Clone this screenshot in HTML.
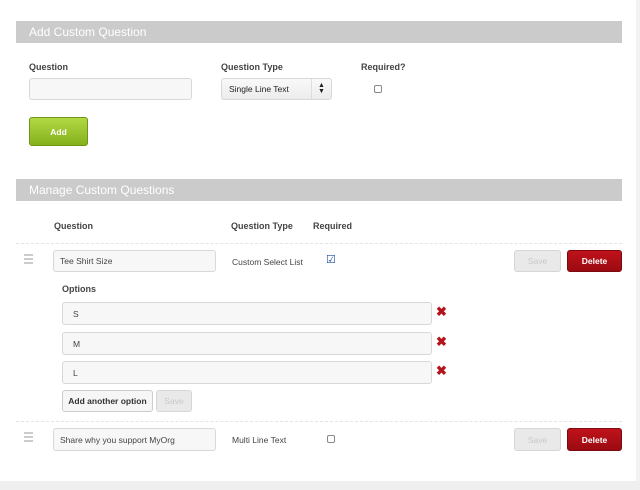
<!DOCTYPE html>
<html><head><style>
*{box-sizing:border-box;margin:0;padding:0}
body{width:640px;height:490px;background:#fff;font-family:"Liberation Sans",sans-serif;position:relative;overflow:hidden;color:#333}
.a{position:absolute}
.bar{background:#cbcbcb;color:#fff;font-size:12px;padding-left:13px}
.lbl{font-size:9px;font-weight:bold;color:#444}
.inp{border:1px solid #d8d8d8;border-radius:3px;background:#f7f7f7;font-size:8.5px;color:#444;padding-left:10px;display:flex;align-items:center}
.btn{border:1px solid #ccc;border-radius:3px;font-size:8.5px;display:flex;align-items:center;justify-content:center}
.save{background:#e9e9e9;color:#c8c8c8;border-color:#d6d6d6}
.del{background:linear-gradient(#c0121b,#9a0b11);color:#fff;font-weight:bold;border-color:#7a0a0e}
.cb{width:8px;height:8px;border:1px solid #888;border-radius:2px;background:#fff}
.x{color:#b5121b;font-size:13px;font-weight:bold}
.dash{border-top:1px dashed #e4e4e4;height:0}
.hd{width:9px}
.hd i{display:block;height:2px;background:#ccc;margin-bottom:2px}
</style></head><body>
<div class="a" style="right:0;top:0;width:4px;height:490px;background:#f3f3f3"></div>
<div class="a" style="left:0;top:481px;width:640px;height:9px;background:#efefef"></div>

<div class="a bar" style="left:16px;top:21px;width:606px;height:22px;line-height:22px">Add Custom Question</div>
<div class="a lbl" style="left:29px;top:62px">Question</div>
<div class="a lbl" style="left:221px;top:62px">Question Type</div>
<div class="a lbl" style="left:361px;top:62px">Required?</div>
<div class="a inp" style="left:29px;top:78px;width:163px;height:22px"></div>
<div class="a inp" style="left:221px;top:78px;width:111px;height:22px;background:linear-gradient(#f9f9f9,#ececec);padding-left:7px;color:#222">Single Line Text</div>
<div class="a" style="left:311px;top:79px;width:1px;height:20px;background:#ddd"></div>
<div class="a" style="left:318px;top:83px;font-size:7px;line-height:6px;color:#222">▲<br>▼</div>
<div class="a cb" style="left:374px;top:85px"></div>
<div class="a btn" style="left:29px;top:117px;width:59px;height:29px;background:linear-gradient(#b2d944,#84b11c);color:#fff;font-weight:bold;border-color:#6f9616">Add</div>

<div class="a bar" style="left:16px;top:179px;width:606px;height:22px;line-height:22px">Manage Custom Questions</div>
<div class="a lbl" style="left:54px;top:221px">Question</div>
<div class="a lbl" style="left:231px;top:221px">Question Type</div>
<div class="a lbl" style="left:313px;top:221px">Required</div>
<div class="a dash" style="left:16px;top:243px;width:606px"></div>

<div class="a hd" style="left:24px;top:254px"><i></i><i></i><i></i></div>
<div class="a inp" style="left:53px;top:250px;width:163px;height:22px;padding-left:6px">Tee Shirt Size</div>
<div class="a" style="left:232px;top:257px;font-size:8.5px;color:#444">Custom Select List</div>
<div class="a" style="left:326px;top:253px;font-size:11px;color:#1a4c9c">☑</div>
<div class="a btn save" style="left:514px;top:250px;width:47px;height:22px">Save</div>
<div class="a btn del" style="left:567px;top:250px;width:55px;height:22px">Delete</div>

<div class="a lbl" style="left:62px;top:284px">Options</div>
<div class="a inp" style="left:62px;top:302px;width:370px;height:23px">S</div>
<div class="a inp" style="left:62px;top:332px;width:370px;height:23px">M</div>
<div class="a inp" style="left:62px;top:361px;width:370px;height:23px">L</div>
<div class="a x" style="left:436px;top:304px">✖</div>
<div class="a x" style="left:436px;top:334px">✖</div>
<div class="a x" style="left:436px;top:363px">✖</div>
<div class="a btn" style="left:62px;top:390px;width:91px;height:22px;background:#f6f6f6;font-weight:bold;color:#333">Add another option</div>
<div class="a btn save" style="left:156px;top:390px;width:36px;height:22px">Save</div>
<div class="a dash" style="left:16px;top:421px;width:606px"></div>

<div class="a hd" style="left:24px;top:432px"><i></i><i></i><i></i></div>
<div class="a inp" style="left:53px;top:428px;width:163px;height:23px;padding-left:6px">Share why you support MyOrg</div>
<div class="a" style="left:232px;top:435px;font-size:8.5px;color:#444">Multi Line Text</div>
<div class="a cb" style="left:327px;top:435px"></div>
<div class="a btn save" style="left:514px;top:428px;width:47px;height:23px">Save</div>
<div class="a btn del" style="left:567px;top:428px;width:55px;height:23px">Delete</div>
</body></html>
